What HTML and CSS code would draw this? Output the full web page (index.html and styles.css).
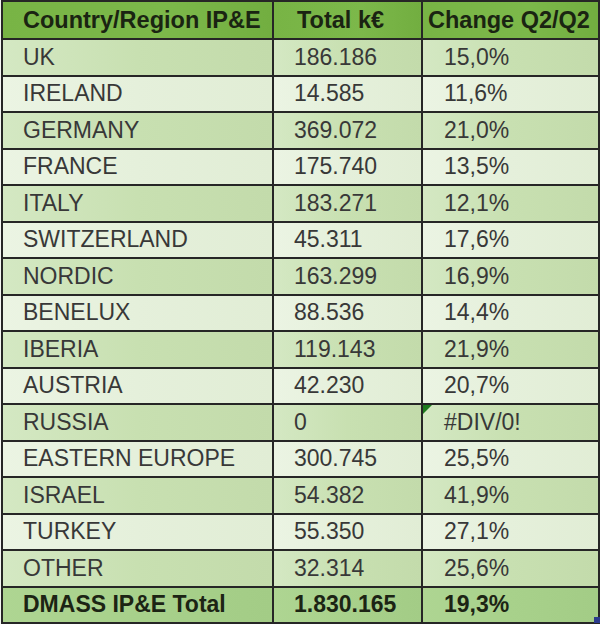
FILE: index.html
```html
<!DOCTYPE html>
<html>
<head>
<meta charset="utf-8">
<link rel="stylesheet" href="styles.css">
</head>
<body>
<div class="sheet">
<table class="report">
  <colgroup>
    <col class="w1">
    <col class="w2">
    <col class="w3">
  </colgroup>
  <thead>
    <tr class="head">
      <th class="c1">Country/Region IP&amp;E</th>
      <th class="c2">Total k€</th>
      <th class="c3">Change Q2/Q2</th>
    </tr>
  </thead>
  <tbody>
    <tr class="dark"><td class="c1">UK</td><td class="c2">186.186</td><td class="c3">15,0%</td></tr>
    <tr class="light"><td class="c1">IRELAND</td><td class="c2">14.585</td><td class="c3">11,6%</td></tr>
    <tr class="dark"><td class="c1">GERMANY</td><td class="c2">369.072</td><td class="c3">21,0%</td></tr>
    <tr class="light"><td class="c1">FRANCE</td><td class="c2">175.740</td><td class="c3">13,5%</td></tr>
    <tr class="dark"><td class="c1">ITALY</td><td class="c2">183.271</td><td class="c3">12,1%</td></tr>
    <tr class="light"><td class="c1">SWITZERLAND</td><td class="c2">45.311</td><td class="c3">17,6%</td></tr>
    <tr class="dark"><td class="c1">NORDIC</td><td class="c2">163.299</td><td class="c3">16,9%</td></tr>
    <tr class="light"><td class="c1">BENELUX</td><td class="c2">88.536</td><td class="c3">14,4%</td></tr>
    <tr class="dark"><td class="c1">IBERIA</td><td class="c2">119.143</td><td class="c3">21,9%</td></tr>
    <tr class="light"><td class="c1">AUSTRIA</td><td class="c2">42.230</td><td class="c3">20,7%</td></tr>
    <tr class="dark"><td class="c1">RUSSIA</td><td class="c2">0</td><td class="c3 flagged"><span class="flag"></span>#DIV/0!</td></tr>
    <tr class="light"><td class="c1">EASTERN EUROPE</td><td class="c2">300.745</td><td class="c3">25,5%</td></tr>
    <tr class="dark"><td class="c1">ISRAEL</td><td class="c2">54.382</td><td class="c3">41,9%</td></tr>
    <tr class="light"><td class="c1">TURKEY</td><td class="c2">55.350</td><td class="c3">27,1%</td></tr>
    <tr class="dark"><td class="c1">OTHER</td><td class="c2">32.314</td><td class="c3">25,6%</td></tr>
    <tr class="total"><td class="c1">DMASS IP&amp;E Total</td><td class="c2">1.830.165</td><td class="c3">19,3%</td></tr>
  </tbody>
</table>
<span class="handle"></span>
</div>
</body>
</html>
```

FILE: styles.css
```css
html, body {
  margin: 0;
  padding: 0;
  background: #f4f6f2;
}

.sheet {
  position: relative;
  width: 600px;
  height: 624px;
  padding: 0 0 0 1px;
  box-sizing: border-box;
}

.report {
  border-collapse: collapse;
  width: 597px;
  table-layout: fixed;
  font-family: "Liberation Sans", Arial, sans-serif;
  color: #383838;
}

.w1 { width: 271px; }
.w2 { width: 149px; }
.w3 { width: 177px; }

.report th,
.report td {
  border: 2px solid #262626;
  padding: 0;
  text-align: left;
  white-space: nowrap;
  overflow: hidden;
  vertical-align: middle;
  line-height: 1;
}

.head th {
  height: 35px;
  background: linear-gradient(90deg, #78b445 0%, #7cb84a 60%, #72ae40 100%);
  color: #1a2412;
  font-weight: bold;
  font-size: 23.5px;
  padding-top: 1px;
}

.head th.c1 { padding-left: 20px; }
.head th.c2 { padding-left: 23px; }
.head th.c3 { padding-left: 5px; }

.report tbody td {
  height: 34.5px;
  font-size: 23px;
}

.report td.c1 { padding-left: 20px; }
.report td.c2 { padding-left: 20px; }
.report td.c3 { padding-left: 21px; }

.dark td {
  background: linear-gradient(90deg, #d4e8c3 0%, #c8e0b1 50%, #c3dbab 100%);
}

.light td {
  background: linear-gradient(90deg, #ebf4e3 0%, #e5f0db 50%, #e1edd5 100%);
}

.total td {
  background: linear-gradient(90deg, #aed592 0%, #a8d18b 50%, #a3cc86 100%);
  font-weight: bold;
  font-size: 23.5px;
  color: #1c2414;
}

.flagged {
  position: relative;
}

.flag {
  position: absolute;
  left: 0;
  top: 0;
  width: 0;
  height: 0;
  border-top: 9px solid #1e7a1e;
  border-right: 9px solid transparent;
}

.handle {
  position: absolute;
  right: 0;
  bottom: 1px;
  width: 6px;
  height: 6px;
  background: #2b3a8c;
}
```
